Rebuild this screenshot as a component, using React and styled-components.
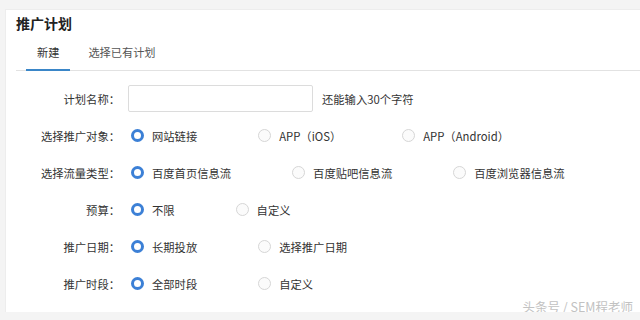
import React, { useState } from "react";
import styled, { createGlobalStyle } from "styled-components";

const GlobalStyle = createGlobalStyle`
  html, body {
    margin: 0;
    padding: 0;
    background: #f4f4f4;
    font-family: "Noto Sans CJK SC", "Noto Sans", sans-serif;
  }
`;

const rows = [
  {
    label: "选择推广对象：",
    options: ["网站链接", "APP（iOS）", "APP（Android）"],
  },
  {
    label: "选择流量类型：",
    options: ["百度首页信息流", "百度贴吧信息流", "百度浏览器信息流"],
  },
  { label: "预算：", options: ["不限", "自定义"] },
  { label: "推广日期：", options: ["长期投放", "选择推广日期"] },
  { label: "推广时段：", options: ["全部时段", "自定义"] },
];

const RadioGroup = ({ options }) => {
  const [selected, setSelected] = useState(0);

  return (
    <StyledOptions>
      {options.map((opt, i) => (
        <StyledOption key={opt} onClick={() => setSelected(i)}>
          <StyledRadio checked={selected === i} />
          <StyledText>{opt}</StyledText>
        </StyledOption>
      ))}
    </StyledOptions>
  );
};

const App = () => {
  const [tab, setTab] = useState(0);

  return (
    <>
      <GlobalStyle />
      <StyledCard>
        <StyledTitle>推广计划</StyledTitle>
        <StyledTabBar>
          {["新建", "选择已有计划"].map((t, i) => (
            <StyledTab key={t} active={tab === i} onClick={() => setTab(i)}>
              {t}
            </StyledTab>
          ))}
        </StyledTabBar>
        <StyledForm>
          <StyledRow>
            <StyledLabel>计划名称：</StyledLabel>
            <StyledInput type="text" />
            <StyledHint>还能输入30个字符</StyledHint>
          </StyledRow>
          {rows.map((row) => (
            <StyledRow key={row.label}>
              <StyledLabel>{row.label}</StyledLabel>
              <RadioGroup options={row.options} />
            </StyledRow>
          ))}
        </StyledForm>
        <StyledWatermark>头条号 / SEM程老师</StyledWatermark>
      </StyledCard>
    </>
  );
};

const StyledCard = styled.div`
  position: relative;
  margin: 10px 0 0 6px;
  height: 302px;
  box-sizing: border-box;
  padding: 3px 0 0 10px;
  background: #fff;
  box-shadow: 0 0 0 1px #ededed;
`;

const StyledTitle = styled.h2`
  margin: 0 0 3px;
  font-size: 14px;
  line-height: 20px;
  font-weight: 700;
  color: #222;
`;

const StyledTabBar = styled.div`
  display: flex;
  gap: 7px;
  padding-left: 10px;
  border-bottom: 1px solid #e2e2e2;
`;

const StyledTab = styled.div`
  height: 33px;
  line-height: 33px;
  padding: 0 11px;
  margin-bottom: -1px;
  font-size: 11.2px;
  color: ${(p) => (p.active ? "#333" : "#555")};
  border-bottom: 2px solid ${(p) => (p.active ? "#3a86c8" : "transparent")};
  cursor: pointer;
`;

const StyledForm = styled.div`
  display: flex;
  flex-direction: column;
  gap: 10px;
  margin-top: 14px;
`;

const StyledRow = styled.div`
  display: flex;
  align-items: center;
  height: 27px;
`;

const StyledLabel = styled.div`
  width: 104px;
  margin-right: 8px;
  text-align: right;
  font-size: 11.3px;
  color: #333;
  white-space: nowrap;
`;

const StyledInput = styled.input`
  width: 185px;
  height: 27px;
  box-sizing: border-box;
  margin: 0;
  border: 1px solid #dcdcdc;
  border-radius: 2px;
  outline: none;
  padding: 0 6px;
`;

const StyledHint = styled.span`
  margin-left: 9px;
  font-size: 11.3px;
  color: #333;
`;

const StyledOptions = styled.div`
  display: flex;
  align-items: center;
  gap: 61px;
  padding-left: 3px;
`;

const StyledOption = styled.label`
  display: flex;
  align-items: center;
  gap: 8px;
  cursor: pointer;
`;

const StyledRadio = styled.span`
  width: 13px;
  height: 13px;
  box-sizing: border-box;
  border-radius: 50%;
  background: ${(p) => (p.checked ? "#fff" : "#fbfbfb")};
  border: ${(p) => (p.checked ? "3.5px solid #3c80d6" : "1px solid #d6d6d6")};
`;

const StyledText = styled.span`
  font-size: 11.3px;
  color: #333;
  white-space: nowrap;
`;

const StyledWatermark = styled.div`
  position: absolute;
  right: 7px;
  bottom: -3px;
  font-size: 12.5px;
  line-height: 16px;
  color: #c2c2c2;
  text-shadow: 0 0 2px #fff;
`;

export default App;
